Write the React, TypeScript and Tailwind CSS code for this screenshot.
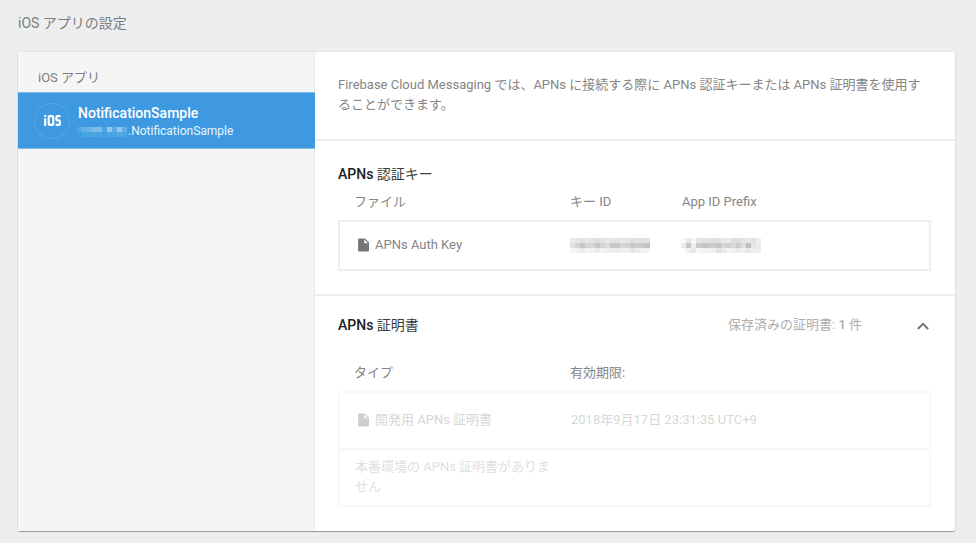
import React from "react";

const keyMosaic = [
  ["#ebebeb", "#e5e5e5", "#e0e0e0", "#e6e6e6", "#e4e4e4", "#dedede", "#e2e2e2", "#e8e8e8", "#e5e5e5", "#e3e3e3", "#e6e6e6", "#e4e4e4", "#dfdfdf", "#e2e2e2", "#e0e0e0", "#e1e1e1"],
  ["#e0e0e0", "#d5d5d5", "#c6c6c6", "#d5d5d5", "#d7d7d7", "#c6c6c6", "#d4d4d4", "#dddddd", "#c8c8c8", "#c8c8c8", "#d5d5d5", "#d1d1d1", "#c8c8c8", "#cfcfcf", "#c8c8c8", "#c2c2c2"],
  ["#f6f6f6", "#f2f2f2", "#eaeaea", "#f3f3f3", "#f2f2f2", "#eaeaea", "#f2f2f2", "#eeeeee", "#ebebeb", "#ebebeb", "#efefef", "#eeeeee", "#e5e5e5", "#eeeeee", "#f2f2f2", "#f3f3f3"],
];

const prefixMosaic = [
  ["#f9f9f9", "#e8e8e8", "#f6f6f6", "#e6e6e6", "#e2e2e2", "#e3e3e3", "#dfdfdf", "#e3e3e3", "#e8e8e8", "#e8e8e8", "#dfdfdf", "#dfdfdf", "#e4e4e4", "#e8e8e8", "#e2e2e2", "#ededed"],
  ["#ececec", "#c7c7c7", "#eeeeee", "#cacaca", "#c4c4c4", "#c8c8c8", "#cdcdcd", "#c4c4c4", "#d7d7d7", "#d1d1d1", "#d8d8d8", "#cbcbcb", "#dedede", "#c0c0c0", "#e4e4e4", "#eaeaea"],
  ["#fcfcfc", "#f0f0f0", "#e8e8e8", "#f6f6f6", "#f2f2f2", "#f2f2f2", "#f0f0f0", "#e2e2e2", "#eaeaea", "#f4f4f4", "#f0f0f0", "#eaeaea", "#f0f0f0", "#e8e8e8", "#f0f0f0", "#eeeeee"],
];

const bundleMosaic = [
  ["#52a6e4", "#62aee6", "#68b4e8", "#7abcea", "#7abcea", "#4aa3e3", "#90c9ef", "#5bace6", "#90c9ef", "#62b0e7"],
  ["#409be0", "#47a3e2", "#4aa6e3", "#4aa6e3", "#4aa6e3", "#45a0e2", "#4aa6e3", "#4aa6e3", "#52aae4", "#4aa6e3"],
];

function Mosaic({ rows }: { rows: string[][] }) {
  return (
    <div className="flex flex-col">
      {rows.map((row, y) => (
        <div key={y} className="flex">
          {row.map((color, x) => (
            <span key={x} className="h-[5px] w-[5px]" style={{ backgroundColor: color }} />
          ))}
        </div>
      ))}
    </div>
  );
}

function FileIcon() {
  return (
    <svg className="mb-px ml-[18px] mr-[7px] h-[14px] w-[11px] shrink-0 text-[#757575]" viewBox="0 0 11 14" fill="currentColor">
      <path d="M1.500 .4H7l4 4.100v7.700c0 .8-.6 1.400-1.400 1.400H1.500C.7 13.600 .1 13 .1 12.200V1.800C.1 1 .7 .4 1.500 .4ZM6.300 1.500v3.700h3.700Z" fillRule="evenodd" />
    </svg>
  );
}

function IosBadge() {
  return (
    <div className="ml-4 flex h-9 w-9 shrink-0 items-center justify-center rounded-full border border-[#52abe5]">
      <svg className="h-[11px] w-[17px]" viewBox="0 0 17 11" fill="none" stroke="#fff" strokeWidth="2.1">
        <path d="M1.200 3.300V11M1.200 0V2" />
        <path d="M5.900 1.100H8.100Q9.300 1.100 9.300 2.300V8.700Q9.300 9.900 8.100 9.900H5.900Q4.700 9.900 4.700 8.700V2.300Q4.700 1.100 5.900 1.100Z" />
        <path d="M16.500 1.100H13.300Q12.400 1.100 12.400 2V4.500Q12.400 5.400 13.300 5.400H14.900Q15.800 5.400 15.800 6.300V9Q15.800 9.900 14.900 9.900H11.600" />
      </svg>
    </div>
  );
}

export default function App() {
  return (
    <div className="h-[543px] w-[976px] overflow-hidden bg-[#edeef0] pl-[18px] font-['Roboto','Noto_Sans_CJK_JP',sans-serif] text-[13px] leading-5 text-[#858585]">
      <h1 className="flex h-[52px] pt-[13px] text-[14px] font-normal text-[#7c7c7c]">iOS アプリの設定</h1>
      <main className="flex h-[479px] w-[937px] rounded-[2px] bg-white shadow-[0_1px_1px_rgba(0,0,0,0.34),0_0_2px_rgba(0,0,0,0.12)]">
        <aside className="w-[297px] shrink-0 border-r border-[#ebebeb] bg-[#f5f5f5]">
          <div className="h-[41px] pl-5 pt-4 text-[#7c7c7c]">iOS アプリ</div>
          <div className="-mt-px flex h-[57px] w-[297px] items-center border-y border-[#7dbce8] bg-[#3f99e0] text-white">
            <IosBadge />
            <div className="ml-2 pt-px">
              <div className="h-[19px] text-[14px] leading-[19px] font-medium">NotificationSample</div>
              <div className="flex h-4 text-[12px] leading-4 text-[#e8f4fd]">
                <div className="-ml-px pt-[4px]">
                  <Mosaic rows={bundleMosaic} />
                </div>
                <span className="ml-px">.NotificationSample</span>
              </div>
            </div>
          </div>
        </aside>
        <div className="flex flex-1 flex-col">
          <section className="h-[89px] border-b-2 border-[#eeeeee] pl-[23px] pr-6 pt-[23px]">
            <p className="whitespace-nowrap">
              Firebase Cloud Messaging では、APNs に接続する際に APNs 認証キーまたは APNs 証明書を使用す
              <br />
              ることができます。
            </p>
          </section>
          <section className="h-[155px] border-b-2 border-[#eeeeee] pl-[23px] pr-6 pt-[23px]">
            <h2 className="h-[28px] text-[14px] font-medium text-[#212121]">
              APNs <span className="font-normal text-[#3c3c3c]">認証キー</span>
            </h2>
            <div className="flex h-[28px]">
              <div className="w-[232px] pl-4">ファイル</div>
              <div className="w-[112px]">キー ID</div>
              <div>App ID Prefix</div>
            </div>
            <div className="flex h-[51px] w-[593px] items-center border-2 border-[#eeeeee]">
              <div className="flex w-[230px] items-center">
                <FileIcon />
                <span className="-ml-px pb-px">APNs Auth Key</span>
              </div>
              <div className="w-[111px]">
                <Mosaic rows={keyMosaic} />
              </div>
              <Mosaic rows={prefixMosaic} />
            </div>
          </section>
          <section className="flex-1 pl-[23px] pr-6 pt-[19px]">
            <div className="flex h-[48px]">
              <h2 className="w-[390px] text-[14px] font-medium text-[#212121]">
                APNs <span className="font-normal text-[#3c3c3c]">証明書</span>
              </h2>
              <span className="w-[189px] text-[#adadad]">
                保存済みの証明書: <span className="font-medium">1</span> 件
              </span>
              <svg className="mt-[7px] h-2 w-3" viewBox="0 0 12 8" fill="none" stroke="#757575" strokeWidth="2">
                <path d="M.8 7 6 1.800 11.200 7" />
              </svg>
            </div>
            <div className="flex h-[28px]">
              <div className="w-[232px] pl-4">タイプ</div>
              <div>有効期限:</div>
            </div>
            <div className="h-[116px] w-[593px] border-2 border-[#f8f8f8] text-[#d7d7d7]">
              <div className="flex h-[57px] items-center border-b-2 border-[#f6f6f6]">
                <div className="flex w-[231px] items-center">
                  <span className="opacity-35">
                    <FileIcon />
                  </span>
                  <span className="-ml-px pb-px">開発用 APNs 証明書</span>
                </div>
                <span className="pb-px">2018年9月17日 23:31:35 UTC+9</span>
              </div>
              <p className="w-[220px] pl-[15px] pt-[7px] text-[#e0e0e0]">
                本番環境の APNs 証明書がありま
                <br />
                せん
              </p>
            </div>
          </section>
        </div>
      </main>
    </div>
  );
}
